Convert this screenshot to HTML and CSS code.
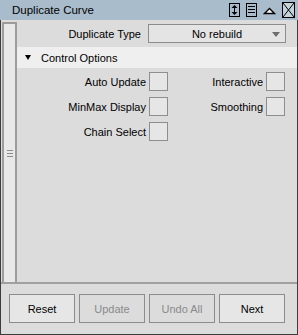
FILE: index.html
```html
<!DOCTYPE html>
<html lang="en">
<head>
  <meta charset="UTF-8" />
  <title>Duplicate Curve</title>
  <link rel="stylesheet" href="styles.css">
</head>
<body>
  <div class="window">
    <div class="titlebar">
      <span class="title">Duplicate Curve</span>
      <div class="tools">
        <svg class="tool" width="11" height="14" viewBox="0 0 11 14">
          <rect x="0.5" y="0.5" width="10" height="13" fill="none" stroke="#000"/>
          <rect x="5" y="4" width="1" height="6" fill="#000"/>
          <polygon points="2.5,5 5.5,2 8.5,5" fill="#000"/>
          <polygon points="2.5,9 5.5,12 8.5,9" fill="#000"/>
        </svg>
        <svg class="tool" width="11" height="14" viewBox="0 0 11 14">
          <rect x="0.5" y="0.5" width="10" height="13" fill="none" stroke="#000"/>
          <rect x="2" y="3" width="7" height="1" fill="#000"/>
          <rect x="2" y="6" width="7" height="1" fill="#000"/>
          <rect x="2" y="9" width="7" height="1" fill="#000"/>
        </svg>
        <svg class="tool" width="13" height="14" viewBox="0 0 13 14">
          <polygon points="1.5,10.5 6.5,5.5 11.5,10.5" fill="#fff" stroke="#000" stroke-width="1.4"/>
        </svg>
        <svg class="tool close" width="13" height="16" viewBox="0 0 13 16">
          <rect x="0.5" y="0.5" width="12" height="15" fill="#c4d2dc" stroke="#000"/>
          <line x1="1" y1="1" x2="12" y2="15" stroke="#000"/>
          <line x1="12" y1="1" x2="1" y2="15" stroke="#000"/>
        </svg>
      </div>
    </div>

    <div class="main">
      <div class="strip"><div class="grip"></div></div>
      <div class="content">
        <div class="type-row">
          <span class="label">Duplicate Type</span>
          <div class="dropdown">
            <span>No rebuild</span>
            <span class="arrow"></span>
          </div>
        </div>
        <div class="section">
          <span class="caret"></span>
          <span>Control Options</span>
        </div>
        <div class="options">
          <span class="label">Auto Update</span>
          <span class="check"></span>
          <span class="label">Interactive</span>
          <span class="check"></span>
          <span class="label">MinMax Display</span>
          <span class="check"></span>
          <span class="label">Smoothing</span>
          <span class="check"></span>
          <span class="label">Chain Select</span>
          <span class="check"></span>
        </div>
      </div>
    </div>

    <div class="footer">
      <button class="btn">Reset</button>
      <button class="btn off">Update</button>
      <button class="btn off">Undo All</button>
      <button class="btn">Next</button>
    </div>
  </div>
</body>
</html>
```

FILE: styles.css
```css
body {
  margin: 0;
  background: #dcdcdc;
  font-family: "Liberation Sans", Arial, sans-serif;
  font-size: 11px;
  color: #000;
}
.window {
  width: 298px;
  height: 335px;
  box-sizing: border-box;
  border-left: 1px solid #3c3c3c;
  border-right: 1px solid #3c3c3c;
  border-bottom: 1px solid #3c3c3c;
  display: flex;
  flex-direction: column;
  background: #dcdcdc;
}
.titlebar {
  height: 20px;
  margin: 0 -1px;
  background: #a9bccb;
  display: flex;
  align-items: center;
  justify-content: space-between;
  padding: 0 3px 0 12px;
  font-size: 11.5px;
}
.tools {
  display: flex;
  align-items: center;
  gap: 6px;
}
.tool {
  display: block;
}
.main {
  height: 264px;
  display: flex;
  padding-top: 2px;
  box-sizing: border-box;
  border-bottom: 2px solid #a0a0a0;
}
.strip {
  width: 11px;
  margin-left: 1px;
  background: #e8e8e8;
  border: 2px solid #9c9c9c;
  border-bottom: none;
  display: flex;
  align-items: center;
  justify-content: center;
}
.grip {
  width: 6px;
  height: 7px;
  background: repeating-linear-gradient(#8c8c8c 0 1px, transparent 1px 3px);
}
.content {
  flex: 1;
}
.type-row {
  display: flex;
  align-items: center;
  gap: 7px;
  padding-top: 2px;
  height: 19px;
}
.label {
  text-align: right;
  white-space: nowrap;
}
.type-row .label {
  width: 124px;
}
.dropdown {
  width: 138px;
  height: 19px;
  box-sizing: border-box;
  background: #e4e4e4;
  border: 1px solid #8c8c8c;
  display: flex;
  align-items: center;
  justify-content: center;
  position: relative;
}
.arrow {
  position: absolute;
  right: 5px;
  top: 7px;
  border-left: 4px solid transparent;
  border-right: 4px solid transparent;
  border-top: 5px solid #6e6e6e;
}
.section {
  margin-top: 4px;
  height: 21px;
  background: #efefef;
  display: flex;
  align-items: center;
  gap: 10px;
  padding-left: 8px;
}
.caret {
  border-left: 3px solid transparent;
  border-right: 3px solid transparent;
  border-top: 5px solid #000;
}
.options {
  display: grid;
  grid-template-columns: 129px 19px 92px 19px;
  grid-auto-rows: 19px;
  column-gap: 3px;
  row-gap: 6px;
  align-items: center;
  padding-top: 4px;
}
.check {
  width: 19px;
  height: 19px;
  box-sizing: border-box;
  background: #e6e6e6;
  border: 1px solid #8e8e8e;
}
.footer {
  flex: 1;
  display: flex;
  gap: 4px;
  padding: 10px 0 0 8px;
}
.btn {
  width: 66px;
  height: 29px;
  background: #e6e6e6;
  border: 1px solid #8c8c8c;
  font-family: inherit;
  font-size: 11px;
  color: #000;
  padding: 0;
}
.btn.off {
  background: #dcdcdc;
  color: #8a8a8a;
}
```
